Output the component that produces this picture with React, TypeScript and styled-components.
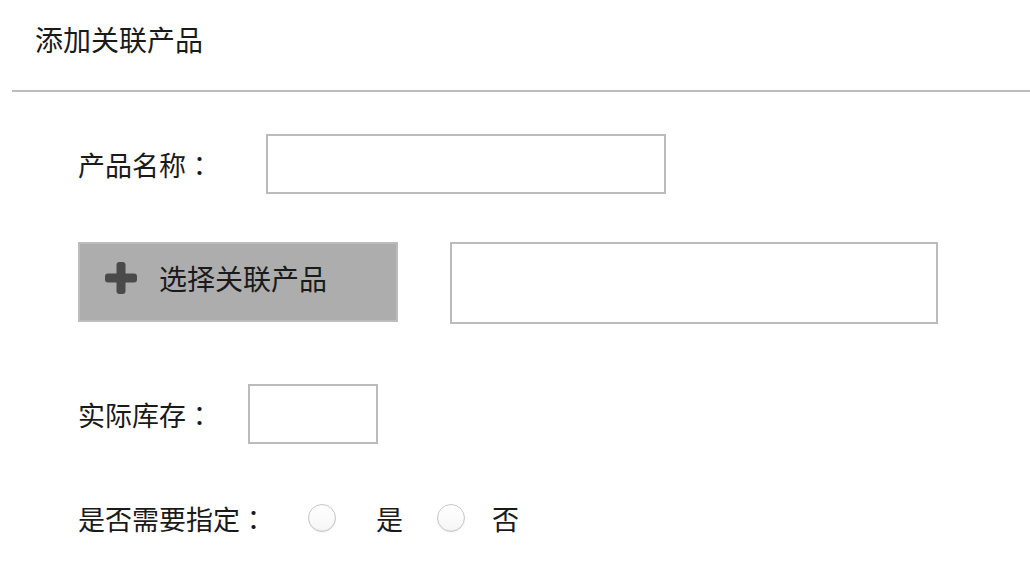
import React from "react";
import styled, { createGlobalStyle } from "styled-components";

const GlobalStyle = createGlobalStyle`
  html, body { margin: 0; padding: 0; background: #fff; }
  body {
    font-family: "Noto Sans CJK SC", "Noto Sans", sans-serif;
    color: #1a1a1a;
  }
`;

const Page = styled.div`
  width: 1030px;
  height: 562px;
  overflow: hidden;
  padding-left: 12px;
  box-sizing: border-box;
`;

const Header = styled.div`
  height: 92px;
  border-bottom: 2px solid #bcbcbc;
  padding-left: 23px;
  padding-top: 25px;
  box-sizing: border-box;
`;

const Title = styled.h1`
  margin: 0;
  font-size: 28px;
  font-weight: 400;
  line-height: 1;
`;

const Form = styled.div`
  display: flex;
  flex-direction: column;
  padding-left: 66px;
`;

const Row = styled.div<{ $mt: number; $align?: string }>`
  display: flex;
  align-items: ${(p) => p.$align || "center"};
  margin-top: ${(p) => p.$mt}px;
`;

const Label = styled.label<{ $w: number }>`
  width: ${(p) => p.$w}px;
  flex: none;
  font-size: 27px;
  line-height: 1;
  white-space: nowrap;
`;

const Colon = styled.span`
  font-family: "Noto Sans CJK TC", "Noto Sans CJK SC", sans-serif;
`;

const TextInput = styled.input<{ $w: number }>`
  width: ${(p) => p.$w}px;
  height: 60px;
  box-sizing: border-box;
  border: 2px solid #bbbbbb;
  background: #fff;
  margin: 0;
  padding: 0 10px;
  outline: none;
  font-size: 22px;
`;

const SelectButton = styled.button`
  display: flex;
  align-items: center;
  gap: 22px;
  width: 320px;
  height: 80px;
  box-sizing: border-box;
  margin: 0;
  padding: 0 0 8px 25px;
  border: 2px solid #bdbdbd;
  background: #adadad;
  color: #1a1a1a;
  font-family: inherit;
  font-size: 28px;
  line-height: 1;
  cursor: pointer;
`;

const ResultBox = styled.textarea`
  width: 488px;
  height: 82px;
  box-sizing: border-box;
  margin: 0 0 0 52px;
  border: 2px solid #bbbbbb;
  background: #fff;
  resize: none;
  outline: none;
`;

const RadioCircle = styled.span<{ $ml: number }>`
  display: inline-block;
  flex: none;
  width: 28px;
  height: 28px;
  margin-left: ${(p) => p.$ml}px;
  box-sizing: border-box;
  border-radius: 50%;
  border: 1px solid #c6c6c6;
  background: linear-gradient(180deg, #ffffff 0%, #f6f6f6 100%);
  box-shadow: inset 0 -1px 1px rgba(0, 0, 0, 0.06), 0 1px 1px rgba(0, 0, 0, 0.04);
`;

const RadioText = styled.span<{ $ml: number }>`
  margin-left: ${(p) => p.$ml}px;
  font-size: 27px;
  line-height: 1;
`;

const PlusIcon = () => (
  <svg width="32" height="32" viewBox="0 0 32 32" aria-hidden="true">
    <rect x="0" y="11.5" width="32" height="9" rx="3" fill="#4a4a4a" />
    <rect x="11.5" y="0" width="9" height="32" rx="3" fill="#4a4a4a" />
  </svg>
);

export default function App() {
  return (
    <Page>
      <GlobalStyle />
      <Header>
        <Title>添加关联产品</Title>
      </Header>
      <Form>
        <Row $mt={42}>
          <Label $w={188}>
            产品名称<Colon>：</Colon>
          </Label>
          <TextInput $w={400} />
        </Row>
        <Row $mt={48} $align="flex-start">
          <SelectButton type="button">
            <PlusIcon />
            <span>选择关联产品</span>
          </SelectButton>
          <ResultBox />
        </Row>
        <Row $mt={60}>
          <Label $w={170}>
            实际库存<Colon>：</Colon>
          </Label>
          <TextInput $w={130} />
        </Row>
        <Row $mt={60}>
          <Label $w={230}>
            是否需要指定<Colon>：</Colon>
          </Label>
          <RadioCircle $ml={0} />
          <RadioText $ml={40}>是</RadioText>
          <RadioCircle $ml={34} />
          <RadioText $ml={27}>否</RadioText>
        </Row>
      </Form>
    </Page>
  );
}
